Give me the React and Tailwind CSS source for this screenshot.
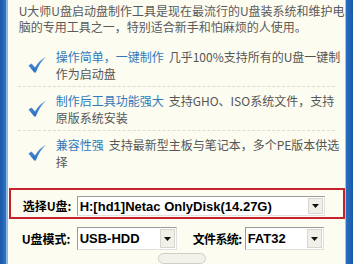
import React from "react";

function Check() {
  return (
    <svg width="20" height="18" viewBox="0 0 20 18" className="shrink-0">
      <defs>
        <linearGradient id="cg" x1="0" y1="0" x2="0" y2="1">
          <stop offset="0" stopColor="#5b9be0" />
          <stop offset="1" stopColor="#2a6cc0" />
        </linearGradient>
      </defs>
      <path
        d="M1.5 9.5 L4.5 7.5 L8 11.5 C11 6.5 14.5 3 19 0.8 C15 4.5 11.5 9.5 8.8 16.5 L7.2 16.5 Z"
        fill="url(#cg)"
      />
    </svg>
  );
}

function Arrow({ h }) {
  return (
    <div className={"w-[15px] mr-[1px] bg-[#f1f0e8] border border-[#d8d6cc] flex items-center justify-center shrink-0 " + h}>
      <svg width="7" height="4" viewBox="0 0 7 4">
        <path d="M0 0 L7 0 L3.5 4 Z" fill="#111" />
      </svg>
    </div>
  );
}

function Select({ text, className, arrowH }) {
  return (
    <div
      className={
        "flex items-center shrink-0 bg-white border border-t-[#9a9a9a] border-l-[#9a9a9a] border-r-[#e0e0e0] border-b-[#e0e0e0] " +
        className
      }
    >
      <span className="flex-1 pl-[2px] text-[13px] font-bold text-black leading-none whitespace-nowrap [font-family:'Liberation_Sans',Arial,sans-serif]">
        {text}
      </span>
      <Arrow h={arrowH} />
    </div>
  );
}

function Item({ title, l1, l2 }) {
  return (
    <div className="flex items-center pt-[5px] pb-[4px]">
      <div className="w-[48px] pl-[19px] flex items-center">
        <Check />
      </div>
      <div className="text-[12px] leading-[17px] text-[#555]">
        <span className="text-[#3079bb]">{title}</span>
        <span className="ml-[5px]">{l1}</span>
        <br />
        <span>{l2}</span>
      </div>
    </div>
  );
}

export default function App() {
  return (
    <div className="w-[353px] h-[264px] flex overflow-hidden [font-family:'Noto_Sans_CJK_SC',sans-serif]">
      <div className="w-[8px] bg-gradient-to-r from-[#1a56a6] to-[#2f74c6]" />
      <div className="w-[2px] bg-[#8ab6e6]" />
      <div className="flex-1 bg-[#fcfcf1] flex flex-col">
        <div className="pl-[11px] pt-[3px] text-[12px] leading-[16px] text-[#5a5a5a] whitespace-nowrap">
          U大师U盘启动盘制作工具是现在最流行的U盘装系统和维护电
          <br />
          脑的专用工具之一，特别适合新手和怕麻烦的人使用。
        </div>
        <div className="mt-[8px] whitespace-nowrap">
          <Item
            title="操作简单，一键制作"
            l1="几乎100%支持所有的U盘一键制"
            l2="作为启动盘"
          />
          <div className="mx-[10px] border-t border-dashed border-[#dcdcd4]" />
          <Item
            title="制作后工具功能强大"
            l1="支持GHO、ISO系统文件，支持"
            l2="原版系统安装"
          />
          <div className="mx-[10px] border-t border-dashed border-[#dcdcd4]" />
          <Item
            title="兼容性强"
            l1="支持最新型主板与笔记本，多个PE版本供选"
            l2="择"
          />
        </div>
        <div className="mt-[14px] ml-[1px] h-[36px] border-2 border-[#c5232b] flex items-end pb-[1px]">
          <span className="w-[66px] pl-[12px] text-[12px] font-bold text-black leading-[20px] whitespace-nowrap">
            选择U盘:
          </span>
          <Select
            text="H:[hd1]Netac OnlyDisk(14.27G)"
            className="w-[248px] h-[20px]"
            arrowH="h-[16px]"
          />
        </div>
        <div className="mt-[8px] flex items-center h-[23px]">
          <span className="w-[69px] pl-[14px] text-[12px] font-bold text-black whitespace-nowrap">
            U盘模式:
          </span>
          <Select text="USB-HDD" className="w-[100px] h-[23px]" arrowH="h-[19px]" />
          <span className="ml-[16px] w-[52px] shrink-0 text-[12px] tracking-[-0.6px] font-bold text-black whitespace-nowrap">
            文件系统:
          </span>
          <Select text="FAT32" className="w-[79px] h-[23px]" arrowH="h-[19px]" />
        </div>
        <div className="mt-[3px] ml-[150px] w-[48px] h-[12px] rounded-full border border-[#cfcfc8] bg-[#f2f2ea]" />
      </div>
      <div className="w-[2px] bg-[#9cc3ec]" />
      <div className="w-[9px] bg-gradient-to-r from-[#2a6fc2] to-[#1a58a8]" />
    </div>
  );
}
